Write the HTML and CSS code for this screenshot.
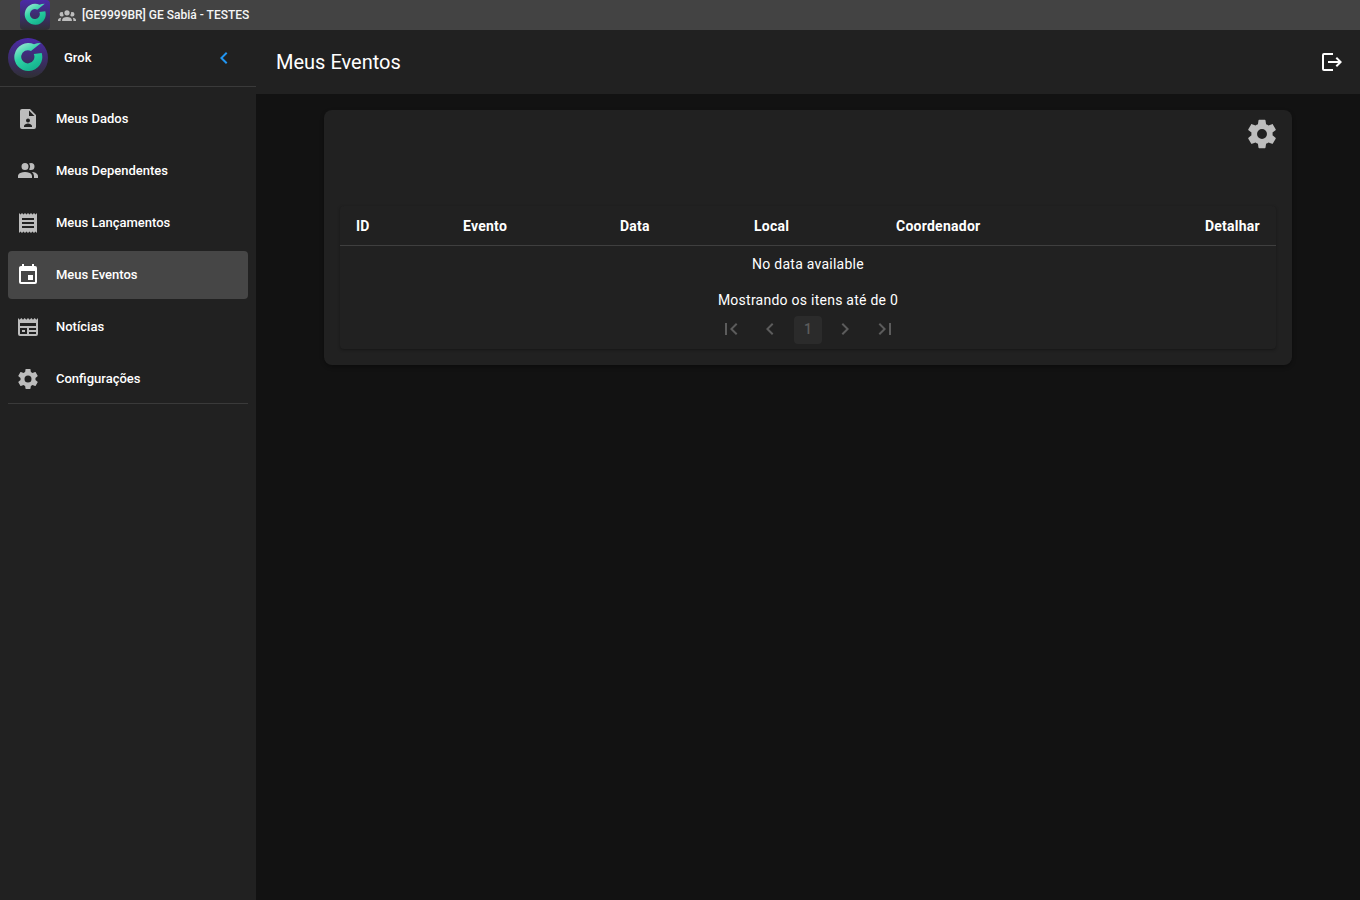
FILE: index.html
```html
<!DOCTYPE html>
<html lang="pt-BR">
<head>
    <meta charset="UTF-8">
    <meta name="viewport" content="width=device-width, initial-scale=1.0">
    <title>Meus Eventos</title>
    <link rel="stylesheet" href="styles.css">
</head>
<body>
    <svg class="defs" width="0" height="0">
        <defs>
            <linearGradient id="logo-ring" x1="0.1" y1="0" x2="0.7" y2="1">
                <stop offset="0" stop-color="#a8e6d8"/>
                <stop offset="0.45" stop-color="#2fd3a6"/>
                <stop offset="1" stop-color="#12b08c"/>
            </linearGradient>
        </defs>
    </svg>

    <div class="topbar">
        <div class="topbar-logo">
            <svg viewBox="0 0 40 40" width="30" height="30"><path fill="url(#logo-ring)" d="M33 5Q29 5 26 6.3A14 14 0 1 0 33.7 15L25.8 16A6.6 6.6 0 1 1 23 13Z"/></svg>
        </div>
        <svg class="topbar-icon" viewBox="0 0 24 24"><path d="M12,5.5A3.5,3.5 0 0,1 15.5,9A3.5,3.5 0 0,1 12,12.5A3.5,3.5 0 0,1 8.5,9A3.5,3.5 0 0,1 12,5.5M5,8C5.56,8 6.08,8.15 6.53,8.42C6.38,9.85 6.8,11.27 7.66,12.38C7.16,13.34 6.16,14 5,14A3,3 0 0,1 2,11A3,3 0 0,1 5,8M19,8A3,3 0 0,1 22,11A3,3 0 0,1 19,14C17.84,14 16.84,13.34 16.34,12.38C17.2,11.27 17.62,9.85 17.47,8.42C17.92,8.15 18.44,8 19,8M5.5,18.25C5.5,16.18 8.41,14.5 12,14.5C15.59,14.5 18.5,16.18 18.5,18.25V20H5.5V18.25M0,20V18.5C0,17.11 1.89,15.94 4.45,15.6C3.86,16.28 3.5,17.22 3.5,18.25V20H0M24,20H20.5V18.25C20.5,17.22 20.14,16.28 19.55,15.6C22.11,15.94 24,17.11 24,18.5V20Z"/></svg>
        <span class="topbar-text">[GE9999BR] GE Sabiá - TESTES</span>
    </div>

    <div class="layout">
        <aside class="sidebar">
            <div class="user-row">
                <div class="user-logo">
                    <svg viewBox="0 0 40 40" width="40" height="40"><path fill="url(#logo-ring)" d="M33 5Q29 5 26 6.3A14 14 0 1 0 33.7 15L25.8 16A6.6 6.6 0 1 1 23 13Z"/></svg>
                </div>
                <span class="user-name">Grok</span>
                <svg class="collapse-icon" viewBox="0 0 24 24"><path d="M15.41,16.58L10.83,12L15.41,7.41L14,6L8,12L14,18L15.41,16.58Z"/></svg>
            </div>

            <nav class="menu">
                <a class="menu-item">
                    <svg class="menu-icon" viewBox="0 0 24 24"><path fill-rule="evenodd" d="M6 2H14L20 8V20A2 2 0 0 1 18 22H6A2 2 0 0 1 4 20V4A2 2 0 0 1 6 2ZM13 3.5V9H18.5ZM12 11.5A2 2 0 1 0 12 15.5A2 2 0 0 0 12 11.5ZM8 20H16V19C16 17.5 13.5 16.6 12 16.6C10.5 16.6 8 17.5 8 19Z"/></svg>
                    <span>Meus Dados</span>
                </a>
                <a class="menu-item">
                    <svg class="menu-icon" viewBox="0 0 24 24"><path d="M16 17V19H2V17S2 13 9 13 16 17 16 17M12.5 7.5A3.5 3.5 0 1 0 9 11A3.5 3.5 0 0 0 12.5 7.5M15.94 13A5.32 5.32 0 0 1 18 17V19H22V17S22 13.37 15.94 13M15 4A3.39 3.39 0 0 0 13.07 4.59A5 5 0 0 1 13.07 10.41A3.39 3.39 0 0 0 15 11A3.5 3.5 0 0 0 15 4Z"/></svg>
                    <span>Meus Dependentes</span>
                </a>
                <a class="menu-item">
                    <svg class="menu-icon" viewBox="0 0 24 24"><path d="M3,22L4.5,20.5L6,22L7.5,20.5L9,22L10.5,20.5L12,22L13.5,20.5L15,22L16.5,20.5L18,22L19.5,20.5L21,22V2L19.5,3.5L18,2L16.5,3.5L15,2L13.5,3.5L12,2L10.5,3.5L9,2L7.5,3.5L6,2L4.5,3.5L3,2M18,9H6V7H18M18,13H6V11H18M18,17H6V15H18V17Z"/></svg>
                    <span>Meus Lançamentos</span>
                </a>
                <a class="menu-item active">
                    <svg class="menu-icon" viewBox="0 0 24 24"><path fill-rule="evenodd" d="M19,3H18V1H16V3H8V1H6V3H5C3.89,3 3,3.9 3,5V19A2,2 0 0,0 5,21H19A2,2 0 0,0 21,19V5A2,2 0 0,0 19,3ZM19,19H5V8H19ZM12,12H17V17H12Z"/></svg>
                    <span>Meus Eventos</span>
                </a>
                <a class="menu-item">
                    <svg class="menu-icon" viewBox="0 0 24 24"><path fill-rule="evenodd" d="M20.33,4.67L18.67,3L17,4.67L15.33,3L13.67,4.67L12,3L10.33,4.67L8.67,3L7,4.67L5.33,3L3.67,4.67L2,3V19A2,2 0 0,0 4,21H20A2,2 0 0,0 22,19V3ZM4,8H20V11H4ZM13,13H20V15H13ZM13,17H20V19H13ZM4,13H11V19H4ZM6,15V17H9V15Z"/></svg>
                    <span>Notícias</span>
                </a>
                <a class="menu-item">
                    <svg class="menu-icon" viewBox="0 0 24 24"><path d="M12,15.5A3.5,3.5 0 0,1 8.5,12A3.5,3.5 0 0,1 12,8.5A3.5,3.5 0 0,1 15.5,12A3.5,3.5 0 0,1 12,15.5M19.43,12.97C19.47,12.65 19.5,12.33 19.5,12C19.5,11.67 19.47,11.34 19.43,11L21.54,9.37C21.73,9.22 21.78,8.95 21.66,8.73L19.66,5.27C19.54,5.05 19.27,4.96 19.05,5.05L16.56,6.05C16.04,5.66 15.5,5.32 14.87,5.07L14.5,2.42C14.46,2.18 14.25,2 14,2H10C9.75,2 9.54,2.18 9.5,2.42L9.13,5.07C8.5,5.32 7.96,5.66 7.44,6.05L4.95,5.05C4.73,4.96 4.46,5.05 4.34,5.27L2.34,8.73C2.21,8.95 2.27,9.22 2.46,9.37L4.57,11C4.53,11.34 4.5,11.67 4.5,12C4.5,12.33 4.53,12.65 4.57,12.97L2.46,14.63C2.27,14.78 2.21,15.05 2.34,15.27L4.34,18.73C4.46,18.95 4.73,19.03 4.95,18.95L7.44,17.94C7.96,18.34 8.5,18.68 9.13,18.93L9.5,21.58C9.54,21.82 9.75,22 10,22H14C14.25,22 14.46,21.82 14.5,21.58L14.87,18.93C15.5,18.67 16.04,18.34 16.56,17.94L19.05,18.95C19.27,19.03 19.54,18.95 19.66,18.73L21.66,15.27C21.78,15.05 21.73,14.78 21.54,14.63L19.43,12.97Z"/></svg>
                    <span>Configurações</span>
                </a>
            </nav>
            <div class="menu-divider"></div>
        </aside>

        <div class="content">
            <header class="page-header">
                <h1 class="page-title">Meus Eventos</h1>
                <svg class="logout-icon" viewBox="0 0 24 24"><path fill-rule="evenodd" d="M4 3H13V5H4V19H13V21H4A2 2 0 0 1 2 19V5A2 2 0 0 1 4 3ZM17 7L22 12L17 17L15.6 15.6L18.2 13H8V11H18.2L15.6 8.4Z"/></svg>
            </header>

            <main class="page-main">
                <section class="card">
                    <div class="card-toolbar">
                        <svg class="gear-icon" viewBox="0 0 24 24"><path d="M12,15.5A3.5,3.5 0 0,1 8.5,12A3.5,3.5 0 0,1 12,8.5A3.5,3.5 0 0,1 15.5,12A3.5,3.5 0 0,1 12,15.5M19.43,12.97C19.47,12.65 19.5,12.33 19.5,12C19.5,11.67 19.47,11.34 19.43,11L21.54,9.37C21.73,9.22 21.78,8.95 21.66,8.73L19.66,5.27C19.54,5.05 19.27,4.96 19.05,5.05L16.56,6.05C16.04,5.66 15.5,5.32 14.87,5.07L14.5,2.42C14.46,2.18 14.25,2 14,2H10C9.75,2 9.54,2.18 9.5,2.42L9.13,5.07C8.5,5.32 7.96,5.66 7.44,6.05L4.95,5.05C4.73,4.96 4.46,5.05 4.34,5.27L2.34,8.73C2.21,8.95 2.27,9.22 2.46,9.37L4.57,11C4.53,11.34 4.5,11.67 4.5,12C4.5,12.33 4.53,12.65 4.57,12.97L2.46,14.63C2.27,14.78 2.21,15.05 2.34,15.27L4.34,18.73C4.46,18.95 4.73,19.03 4.95,18.95L7.44,17.94C7.96,18.34 8.5,18.68 9.13,18.93L9.5,21.58C9.54,21.82 9.75,22 10,22H14C14.25,22 14.46,21.82 14.5,21.58L14.87,18.93C15.5,18.67 16.04,18.34 16.56,17.94L19.05,18.95C19.27,19.03 19.54,18.95 19.66,18.73L21.66,15.27C21.78,15.05 21.73,14.78 21.54,14.63L19.43,12.97Z"/></svg>
                    </div>

                    <div class="table-wrap">
                        <table class="data-table">
                            <colgroup>
                                <col class="col-id">
                                <col class="col-evento">
                                <col class="col-data">
                                <col class="col-local">
                                <col class="col-coord">
                                <col>
                            </colgroup>
                            <thead>
                                <tr>
                                    <th>ID</th>
                                    <th>Evento</th>
                                    <th>Data</th>
                                    <th>Local</th>
                                    <th>Coordenador</th>
                                    <th class="align-right">Detalhar</th>
                                </tr>
                            </thead>
                            <tbody>
                                <tr>
                                    <td colspan="6">No data available</td>
                                </tr>
                            </tbody>
                        </table>
                        <div class="table-footer">Mostrando os itens até de 0</div>
                        <div class="pagination">
                            <span class="page-btn"><svg viewBox="0 0 24 24"><path d="M18.41,16.59L13.82,12L18.41,7.41L17,6L11,12L17,18L18.41,16.59M6,6H8V18H6V6Z"/></svg></span>
                            <span class="page-btn"><svg viewBox="0 0 24 24"><path d="M15.41,16.58L10.83,12L15.41,7.41L14,6L8,12L14,18L15.41,16.58Z"/></svg></span>
                            <span class="page-btn current">1</span>
                            <span class="page-btn"><svg viewBox="0 0 24 24"><path d="M8.59,16.58L13.17,12L8.59,7.41L10,6L16,12L10,18L8.59,16.58Z"/></svg></span>
                            <span class="page-btn"><svg viewBox="0 0 24 24"><path d="M5.59,7.41L10.18,12L5.59,16.59L7,18L13,12L7,6L5.59,7.41M16,6H18V18H16V6Z"/></svg></span>
                        </div>
                    </div>
                </section>
            </main>
        </div>
    </div>
</body>
</html>
```

FILE: styles.css
```css
* {
    box-sizing: border-box;
}

html, body {
    height: 100%;
}

body {
    margin: 0;
    display: flex;
    flex-direction: column;
    overflow: hidden;
    font-family: 'Roboto', 'Liberation Sans', sans-serif;
    color: #ffffff;
    background-color: #121212;
}

.defs {
    position: absolute;
}

/* barra superior */
.topbar {
    height: 30px;
    flex-shrink: 0;
    display: flex;
    align-items: center;
    padding-left: 20px;
    background-color: #434343;
}

.topbar-logo {
    width: 30px;
    height: 30px;
    border-radius: 4px;
    background: linear-gradient(#4b2aa8, #2f2f33);
}

.topbar-logo svg, .user-logo svg {
    display: block;
}

.topbar-icon {
    width: 18px;
    height: 18px;
    margin-left: 8px;
    fill: #bdbdbd;
}

.topbar-text {
    margin-left: 6px;
    padding-bottom: 1px;
    font-size: 12px;
    font-weight: 500;
    color: #f5f5f5;
}

.layout {
    flex: 1;
    display: flex;
    min-height: 0;
}

/* menu lateral */
.sidebar {
    width: 256px;
    flex-shrink: 0;
    background-color: #212121;
}

.user-row {
    height: 57px;
    display: flex;
    align-items: center;
    padding-left: 8px;
    border-bottom: 1px solid #3a3a3a;
}

.user-logo {
    width: 40px;
    height: 40px;
    border-radius: 50%;
    background: linear-gradient(#4b2aa8, #2f2f33);
}

.user-name {
    margin-left: 16px;
    padding-bottom: 2px;
    font-size: 13px;
    font-weight: 500;
}

.collapse-icon {
    width: 24px;
    height: 24px;
    margin-left: auto;
    margin-right: 20px;
    fill: #2196f3;
}

.menu {
    display: flex;
    flex-direction: column;
    gap: 4px;
    padding: 8px 8px 0;
}

.menu-item {
    height: 48px;
    display: flex;
    align-items: center;
    padding: 0 8px;
    border-radius: 4px;
    font-size: 13px;
    font-weight: 500;
    color: #ffffff;
}

.menu-item span {
    padding-bottom: 2px;
}

.menu-item.active {
    background-color: #464646;
}

.menu-icon {
    width: 24px;
    height: 24px;
    margin-right: 16px;
    fill: #bdbdbd;
}

.menu-item.active .menu-icon {
    fill: #ffffff;
}

.menu-divider {
    height: 1px;
    margin: 0 8px;
    background-color: #3a3a3a;
}

/* conteudo */
.content {
    flex: 1;
    display: flex;
    flex-direction: column;
    min-width: 0;
}

.page-header {
    height: 64px;
    flex-shrink: 0;
    display: flex;
    align-items: center;
    justify-content: space-between;
    padding: 0 16px 0 20px;
    background-color: #212121;
}

.page-title {
    margin: 0;
    font-size: 20px;
    font-weight: 400;
}

.logout-icon {
    width: 24px;
    height: 24px;
    fill: #ffffff;
}

.page-main {
    flex: 1;
    padding: 16px 68px;
}

.card {
    padding: 16px;
    border-radius: 8px;
    background-color: #212121;
    box-shadow: 0 2px 4px rgba(0, 0, 0, 0.3);
}

.card-toolbar {
    height: 80px;
    display: flex;
    justify-content: flex-end;
    align-items: flex-start;
}

.gear-icon {
    width: 34px;
    height: 34px;
    margin: -9px -3px 0 0;
    fill: #bdbdbd;
}

.table-wrap {
    padding-bottom: 5px;
    border-radius: 4px;
    background-color: #212121;
    box-shadow: 0 1px 3px rgba(0, 0, 0, 0.35);
}

.data-table {
    width: 100%;
    border-collapse: collapse;
    table-layout: fixed;
    font-size: 14px;
    letter-spacing: 0.25px;
}

.col-id { width: 107px; }
.col-evento { width: 157px; }
.col-data { width: 134px; }
.col-local { width: 142px; }
.col-coord { width: 220px; }

.data-table th {
    height: 39px;
    padding: 2px 16px 0;
    text-align: left;
    font-weight: 700;
    border-bottom: 1px solid #3f3f3f;
}

.data-table th.align-right {
    text-align: right;
}

.data-table td {
    height: 37px;
    text-align: center;
    color: #ffffff;
}

.table-footer {
    height: 34px;
    line-height: 36px;
    text-align: center;
    font-size: 14px;
    letter-spacing: 0.25px;
    color: #ffffff;
}

.pagination {
    display: flex;
    justify-content: center;
    gap: 10px;
}

.page-btn {
    width: 28px;
    height: 28px;
    display: flex;
    align-items: center;
    justify-content: center;
    padding-bottom: 2px;
    border-radius: 4px;
    font-size: 14px;
    font-weight: 500;
    color: #5c5c5c;
}

/* os botoes nao ficam com espaco igual */
.page-btn:nth-child(1) { margin-right: 1px; }
.page-btn:nth-child(3) { margin-right: -1px; }
.page-btn:nth-child(4) { margin-right: 2px; }

.page-btn svg {
    width: 24px;
    height: 24px;
    flex-shrink: 0;
    fill: #5c5c5c;
}

.page-btn.current {
    background-color: #2b2b2b;
}
```
